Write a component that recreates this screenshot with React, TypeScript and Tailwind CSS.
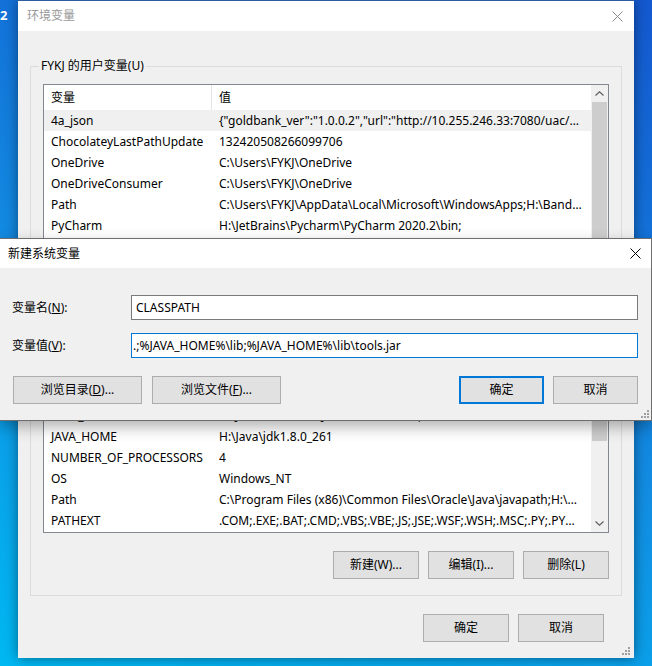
import type { ReactNode } from "react";

const font = "font-['Noto_Sans','Noto_Sans_CJK_SC',sans-serif] text-[12px]";

const userVars: [string, string][] = [
    ["4a_json", '{"goldbank_ver":"1.0.0.2","url":"http://10.255.246.33:7080/uac/sso/login","version":"1.0"}'],
    ["ChocolateyLastPathUpdate", "132420508266099706"],
    ["OneDrive", "C:\\Users\\FYKJ\\OneDrive"],
    ["OneDriveConsumer", "C:\\Users\\FYKJ\\OneDrive"],
    ["Path", "C:\\Users\\FYKJ\\AppData\\Local\\Microsoft\\WindowsApps;H:\\Bandizip\\;H:\\Microsoft VS Code\\bin"],
    ["PyCharm", "H:\\JetBrains\\Pycharm\\PyCharm 2020.2\\bin;"],
    ["TEMP", "C:\\Users\\FYKJ\\AppData\\Local\\Temp"],
];

const sysVars: [string, string][] = [
    ["ComSpec", "C:\\Windows\\system32\\cmd.exe"],
    ["DriverData", "C:\\Windows\\System32\\Drivers\\DriverData"],
    ["IDEA_HOME", "H:\\JetBrains\\IntelliJ IDEA 2020.2\\bin;"],
    ["JAVA_HOME", "H:\\Java\\jdk1.8.0_261"],
    ["NUMBER_OF_PROCESSORS", "4"],
    ["OS", "Windows_NT"],
    ["Path", "C:\\Program Files (x86)\\Common Files\\Oracle\\Java\\javapath;H:\\Python\\Scripts\\"],
    ["PATHEXT", ".COM;.EXE;.BAT;.CMD;.VBS;.VBE;.JS;.JSE;.WSF;.WSH;.MSC;.PY;.PYW;.RB;.RBW"],
];

function Btn({ children, w = "w-[86px]", primary = false }: { children: ReactNode; w?: string; primary?: boolean }) {
    return (
        <div className={`${w} h-[28px] flex items-center justify-center bg-[#e1e1e1] text-black ${primary ? "border-2 border-[#0078d7]" : "border border-[#adadad]"}`}>
            {children}
        </div>
    );
}

function CloseX({ color }: { color: string }) {
    return (
        <svg width="11" height="11" viewBox="0 0 11 11">
            <path d="M0.5 0.5 L10.5 10.5 M10.5 0.5 L0.5 10.5" stroke={color} strokeWidth="1" />
        </svg>
    );
}

function Grip() {
    return (
        <svg width="8" height="8" viewBox="0 0 8 8" fill="#a0a0a0">
            <rect x="6" y="0" width="2" height="2" />
            <rect x="3" y="3" width="2" height="2" />
            <rect x="6" y="3" width="2" height="2" />
            <rect x="0" y="6" width="2" height="2" />
            <rect x="3" y="6" width="2" height="2" />
            <rect x="6" y="6" width="2" height="2" />
        </svg>
    );
}

function Scrollbar({ thumbTop, thumbHeight }: { thumbTop: number; thumbHeight: number }) {
    return (
        <div className="w-[17px] h-full bg-[#f0f0f0] flex flex-col">
            <div className="h-[17px] flex items-center justify-center">
                <svg width="9" height="5" viewBox="0 0 9 5">
                    <path d="M0.5 4.5 L4.5 0.8 L8.5 4.5" stroke="#606060" fill="none" strokeWidth="1.2" />
                </svg>
            </div>
            <div className="flex-1 relative">
                <div className="absolute left-[1px] right-[1px] bg-[#cdcdcd]" style={{ top: thumbTop, height: thumbHeight }} />
            </div>
            <div className="h-[17px] flex items-center justify-center">
                <svg width="9" height="5" viewBox="0 0 9 5">
                    <path d="M0.5 0.5 L4.5 4.2 L8.5 0.5" stroke="#606060" fill="none" strokeWidth="1.2" />
                </svg>
            </div>
        </div>
    );
}

function VarList({ rows, height, selected, thumbTop, thumbHeight }: { rows: [string, string][]; height: string; selected?: number; thumbTop: number; thumbHeight: number }) {
    return (
        <div className={`${height} border border-[#828790] bg-white flex overflow-hidden`}>
            <div className="flex-1 min-w-0 flex flex-col">
                <div className="h-[25px] flex items-center shrink-0">
                    <div className="w-[168px] h-full flex items-center pl-[7px] border-r border-[#e5e5e5]">变量</div>
                    <div className="pl-[7px]">值</div>
                </div>
                {rows.map(([name, value], i) => (
                    <div key={name + i} className={`h-[21px] shrink-0 flex items-center ${i === selected ? "bg-[#f0f0f0]" : ""}`}>
                        <div className="w-[168px] pl-[7px] whitespace-nowrap overflow-hidden">{name}</div>
                        <div className="flex-1 min-w-0 pl-[7px] pr-[8px] truncate">{value}</div>
                    </div>
                ))}
            </div>
            <Scrollbar thumbTop={thumbTop} thumbHeight={thumbHeight} />
        </div>
    );
}

function GroupBox({ label, children, className = "" }: { label: string; children: ReactNode; className?: string }) {
    return (
        <div className={`relative border border-[#dcdcdc] px-[12px] pt-[17px] ${className}`}>
            <span className="absolute left-[8px] top-[-10px] px-[2px] bg-[#f0f0f0] leading-[18px]">{label}</span>
            {children}
        </div>
    );
}

export default function App() {
    return (
        <div className={`relative w-[652px] h-[666px] overflow-hidden bg-[linear-gradient(200deg,#1458cf_0%,#128de2_55%,#00b8f2_100%)] text-black ${font}`}>
            {/* desktop icon label peeking out */}
            <span className="absolute left-0 top-[6px] text-white font-bold text-[13px]">2</span>

            {/* 环境变量 window */}
            <div className="absolute left-[18px] top-0 w-[616px] h-[658px] bg-[#f0f0f0] flex flex-col shadow-[0_0_12px_rgba(0,0,0,0.45)]">
                <div className="h-[31px] shrink-0 bg-white border-t border-[#2f5e9e] flex items-center justify-between pl-[9px] pr-[11px]">
                    <span className="text-[#999999]">环境变量</span>
                    <CloseX color="#8a8a8a" />
                </div>
                <div className="px-[12px] pt-[35px] flex flex-col">
                    <GroupBox label="FYKJ 的用户变量(U)" className="pb-[15px]">
                        <VarList rows={userVars} height="h-[160px]" selected={0} thumbTop={0} thumbHeight={200} />
                        <div className="mt-[18px] flex justify-end gap-[9px]">
                            <Btn>新建(N)...</Btn>
                            <Btn>编辑(E)...</Btn>
                            <Btn>删除(D)</Btn>
                        </div>
                    </GroupBox>
                    <GroupBox label="系统变量(S)" className="mt-[13px] pb-[16px]">
                        <VarList rows={sysVars} height="h-[196px]" thumbTop={36} thumbHeight={50} />
                        <div className="mt-[18px] flex justify-end gap-[9px]">
                            <Btn>新建(W)...</Btn>
                            <Btn>编辑(I)...</Btn>
                            <Btn>删除(L)</Btn>
                        </div>
                    </GroupBox>
                    <div className="mt-[18px] pr-[18px] flex justify-end gap-[9px]">
                        <Btn>确定</Btn>
                        <Btn>取消</Btn>
                    </div>
                </div>
                <div className="absolute right-[4px] bottom-[3px]"><Grip /></div>
            </div>

            {/* 新建系统变量 dialog */}
            <div className="absolute left-[-1px] top-[238px] w-[653px] h-[183px] bg-[#f0f0f0] border border-[#6e6e6e] flex flex-col shadow-[0_6px_14px_rgba(0,0,0,0.3)]">
                <div className="h-[29px] shrink-0 bg-white flex items-center justify-between pl-[8px] pr-[10px]">
                    <span>新建系统变量</span>
                    <CloseX color="#000000" />
                </div>
                <div className="pl-[12px] pr-[12px] pt-[27px] flex flex-col">
                    <div className="flex items-center">
                        <div className="w-[119px]">变量名(<u>N</u>):</div>
                        <div className="w-[507px] h-[25px] border border-[#7a7a7a] bg-white flex items-center pl-[4px]">CLASSPATH</div>
                    </div>
                    <div className="mt-[13px] flex items-center">
                        <div className="w-[119px]">变量值(<u>V</u>):</div>
                        <div className="w-[507px] h-[25px] border border-[#0078d7] bg-white flex items-center pl-[1px] whitespace-nowrap">.;%JAVA_HOME%\lib;%JAVA_HOME%\lib\tools.jar</div>
                    </div>
                    <div className="mt-[18px] pl-[1px] flex items-center">
                        <Btn w="w-[129px]">浏览目录(<u>D</u>)...</Btn>
                        <div className="ml-[10px]"><Btn w="w-[129px]">浏览文件(<u>F</u>)...</Btn></div>
                        <div className="ml-auto mr-[1px] flex gap-[9px]">
                            <Btn w="w-[85px]" primary>确定</Btn>
                            <Btn w="w-[85px]">取消</Btn>
                        </div>
                    </div>
                </div>
                <div className="absolute right-[2px] bottom-[2px]"><Grip /></div>
            </div>
        </div>
    );
}
